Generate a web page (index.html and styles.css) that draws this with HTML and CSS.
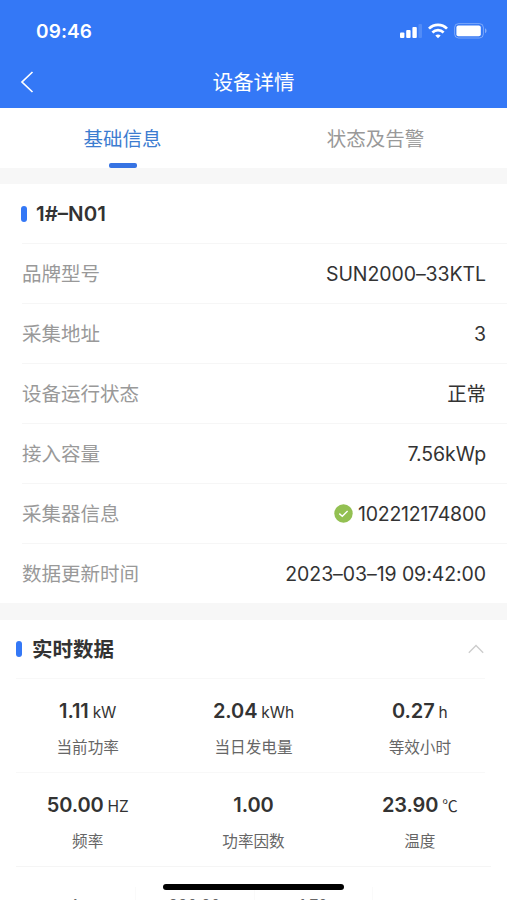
FILE: index.html
```html
<!DOCTYPE html>
<html lang="zh-CN">
<head>
  <meta charset="UTF-8" />
  <meta name="viewport" content="width=device-width, initial-scale=1.0" />
  <title>设备详情</title>
  <link rel="stylesheet" href="styles.css">
</head>
<body>
  <header>
    <div class="status-bar">
      <span class="clock">09:46</span>
      <div class="status-icons">
        <svg class="signal" width="22" height="16" viewBox="0 0 22 16" fill="#fff">
          <rect x="0" y="9.5" width="4.4" height="5.5" rx="1" />
          <rect x="6.2" y="7" width="4.4" height="8" rx="1" />
          <rect x="12.4" y="4" width="4.4" height="11" rx="1" />
          <rect x="18.4" y="1" width="3.6" height="14" rx="1" opacity="0.15" />
        </svg>
        <svg class="wifi" width="20" height="16" viewBox="0 0 20 16" fill="none" stroke="#fff" stroke-width="2.7">
          <path d="M1 5.6C6 .6 14 .6 19 5.6" />
          <path d="M4.4 9.4c3.2-3 8-3 11.2 0" />
          <path d="M10 15.2l-2.700-2.700c1.500-1.400 3.900-1.400 5.400 0z" fill="#fff" stroke="none" />
        </svg>
        <svg class="battery" width="33" height="16" viewBox="0 0 33 16">
          <rect x="0.6" y="0.6" width="28.8" height="14.4" rx="4" fill="none" stroke="#fff" stroke-opacity="0.35" stroke-width="1" />
          <rect x="2.4" y="2.4" width="24.4" height="10.8" rx="2" fill="#fff" />
          <path d="M31 5.3c2 .8 2 4.2 0 5z" fill="#fff" opacity="0.4" />
        </svg>
      </div>
    </div>
    <div class="nav-bar">
      <svg class="back" width="14" height="22" viewBox="0 0 14 22" fill="none" stroke="#fff" stroke-width="1.7">
        <path d="M12.5 1L2 11l10.5 10" />
      </svg>
      <h1>设备详情</h1>
    </div>
  </header>

  <nav class="tabs">
    <div class="tab active">基础信息</div>
    <div class="tab">状态及告警</div>
  </nav>

  <section class="info">
    <div class="info-title"><i class="mark"></i><h2>1#–N01</h2></div>
    <div class="row"><span class="label">品牌型号</span><span class="value">SUN2000–33KTL</span></div>
    <div class="row"><span class="label">采集地址</span><span class="value">3</span></div>
    <div class="row"><span class="label">设备运行状态</span><span class="value">正常</span></div>
    <div class="row"><span class="label">接入容量</span><span class="value">7.56kWp</span></div>
    <div class="row">
      <span class="label">采集器信息</span>
      <span class="value collector">
        <svg width="19" height="19" viewBox="0 0 19 19">
          <circle cx="9.5" cy="9.5" r="9.2" fill="#93c052" />
          <path d="M5.3 9.6l3 2.6 5.3-5.1" fill="none" stroke="#fff" stroke-width="1.4" />
        </svg>
        <span>102212174800</span>
      </span>
    </div>
    <div class="row"><span class="label">数据更新时间</span><span class="value">2023–03–19 09:42:00</span></div>
  </section>

  <section class="realtime">
    <div class="realtime-title">
      <i class="mark"></i>
      <h2>实时数据</h2>
      <svg class="arrow" width="16" height="10" viewBox="0 0 16 10" fill="none" stroke="#ccc" stroke-width="1.3">
        <path d="M.8 8.8L8 1.5l7.2 7.3" />
      </svg>
    </div>
    <div class="grid">
      <div class="cell"><p class="num">1.11 <small>kW</small></p><p class="name">当前功率</p></div>
      <div class="cell"><p class="num">2.04 <small>kWh</small></p><p class="name">当日发电量</p></div>
      <div class="cell"><p class="num">0.27 <small>h</small></p><p class="name">等效小时</p></div>
    </div>
    <div class="grid">
      <div class="cell"><p class="num">50.00 <small>HZ</small></p><p class="name">频率</p></div>
      <div class="cell"><p class="num">1.00</p><p class="name">功率因数</p></div>
      <div class="cell"><p class="num">23.90 <small class="degree">℃</small></p><p class="name">温度</p></div>
    </div>
    <div class="phase">
      <span>A</span>
      <span>220.90</span>
      <span>1.70</span>
      <span></span>
    </div>
  </section>

  <div class="home-bar"></div>
</body>
</html>
```
FILE: styles.css
```css
* {
  box-sizing: border-box;
}

body {
  margin: 0;
  height: 900px;
  overflow: hidden;
  background: #f7f7f7;
  color: #333;
  font-family: Inter, "Noto Sans CJK SC", sans-serif;
}

h1, h2, p {
  margin: 0;
}

header {
  height: 108px;
  background: #3478f6;
  color: #fff;
}

.status-bar {
  display: flex;
  justify-content: space-between;
  height: 56px;
  padding: 23px 20px 0 36px;
}

.clock {
  font-size: 19px;
  line-height: 18px;
  font-weight: 600;
  letter-spacing: 0.1px;
}

.status-icons {
  display: flex;
  gap: 6px;
}

.nav-bar {
  display: grid;
  grid-template-columns: 60px 1fr 60px;
  align-items: center;
  height: 52px;
}

.back {
  margin-left: 20px;
}

.nav-bar h1 {
  padding-top: 2px;
  font-size: 20.5px;
  line-height: 30px;
  font-weight: 400;
  text-align: center;
}

.tabs {
  display: flex;
  height: 60px;
  background: #fff;
}

.tab {
  flex: 1;
  display: flex;
  flex-direction: column;
  align-items: center;
  padding-top: 17px;
  font-size: 19.5px;
  line-height: 28px;
  color: #999;
}

.tab.active {
  padding-right: 8px;
  color: #3c7cd0;
}

.tab:last-child {
  padding-right: 9px;
}

.tab.active::after {
  content: "";
  width: 28px;
  height: 5px;
  margin-top: 10px;
  border-radius: 2px;
  background: #3673e3;
}

.info {
  margin-top: 16px;
  background: #fff;
}

.info-title {
  display: flex;
  align-items: center;
  height: 59px;
  padding-left: 21px;
}

.mark {
  width: 6px;
  height: 16px;
  border-radius: 3px;
  background: #3478f6;
}

h2 {
  font-size: 20.5px;
  line-height: 28px;
  font-weight: 600;
  margin-left: 9px;
}

.row {
  display: flex;
  align-items: center;
  justify-content: space-between;
  height: 60px;
  margin-left: 22px;
  padding-right: 21px;
  border-top: 1px solid #f6f6f6;
  font-size: 19.5px;
  line-height: 28px;
}

.label {
  color: #999;
}

.value {
  letter-spacing: -0.08px;
}

.collector {
  display: flex;
  align-items: center;
  gap: 5px;
  letter-spacing: -0.25px;
}

.realtime {
  margin-top: 17px;
  background: #fff;
}

.realtime-title {
  display: flex;
  align-items: center;
  height: 58px;
  padding: 0 23px 0 16px;
}

.realtime-title h2 {
  padding-top: 2px;
  margin-left: 10px;
}

.arrow {
  margin-left: auto;
}

.grid {
  display: grid;
  grid-template-columns: repeat(3, 1fr);
  height: 94px;
  margin: 0 22px 0 16px;
  border-top: 1px solid #f8f8f8;
  padding-top: 18px;
  text-align: center;
}

.grid .cell:first-child {
  padding-right: 13px;
}

.grid .cell:nth-child(2) {
  padding-left: 6px;
}

.grid .cell:last-child {
  padding-left: 26px;
}

.num {
  height: 28px;
  font-size: 20px;
  line-height: 28px;
  font-weight: 600;
  letter-spacing: -0.1px;
  white-space: nowrap;
}

.num small {
  margin-left: -1px;
  font-size: 15.5px;
  font-weight: 400;
  line-height: 20px;
}

.num .degree {
  font-family: "Noto Sans CJK SC", sans-serif;
}

.name {
  margin-top: 12px;
  font-size: 15.6px;
  line-height: 22px;
  color: #666;
}

.phase {
  display: grid;
  grid-template-columns: repeat(4, 1fr);
  height: 60px;
  margin: 0 16px;
  border-top: 1px solid #f5f5f5;
  padding-top: 20px;
  font-size: 15.5px;
  line-height: 38px;
  text-align: center;
  color: #666;
}

.phase span + span {
  border-left: 1px solid #fafafa;
}

.home-bar {
  position: absolute;
  left: 163px;
  top: 884px;
  width: 181px;
  height: 6px;
  border-radius: 3px;
  background: #000;
}
```
